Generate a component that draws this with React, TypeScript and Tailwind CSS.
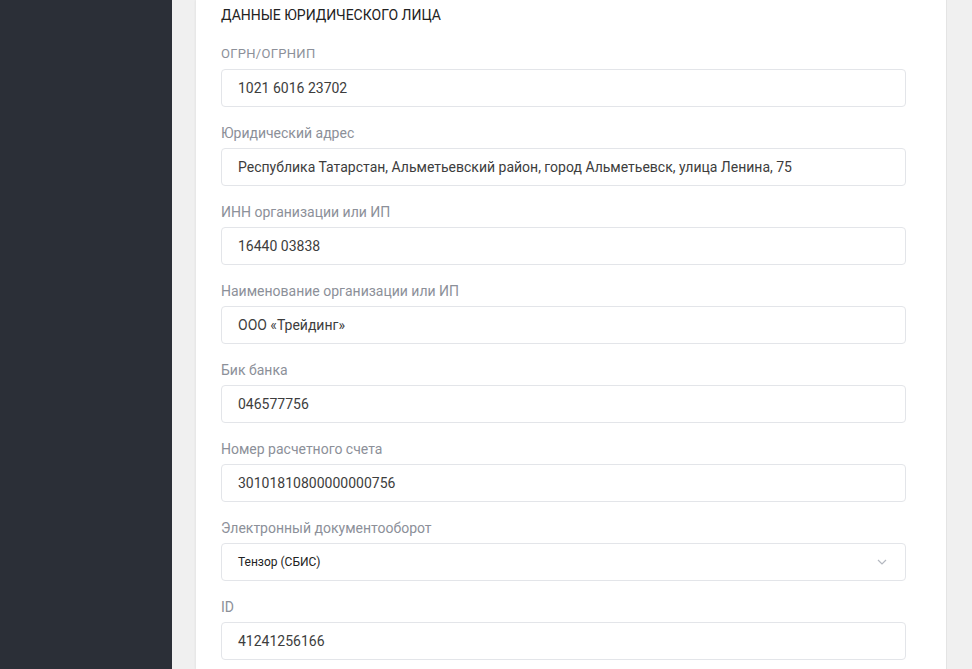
import React from 'react'

const fields: { label: string; value: string; select?: boolean; upper?: boolean }[] = [
  { label: 'ОГРН/ОГРНИП', value: '1021 6016 23702', upper: true },
  { label: 'Юридический адрес', value: 'Республика Татарстан, Альметьевский район, город Альметьевск, улица Ленина, 75' },
  { label: 'ИНН организации или ИП', value: '16440 03838' },
  { label: 'Наименование организации или ИП', value: 'ООО «Трейдинг»' },
  { label: 'Бик банка', value: '046577756' },
  { label: 'Номер расчетного счета', value: '30101810800000000756' },
  { label: 'Электронный документооборот', value: 'Тензор (СБИС)', select: true },
  { label: 'ID', value: '41241256166' },
]

function Field({ label, value, select, upper }: { label: string; value: string; select?: boolean; upper?: boolean }) {
  return (
    <div className="mb-4">
      <div className={`h-5 leading-5 text-[#8c9099] mb-[5px] ${upper ? 'text-[13px] tracking-[0.3px]' : 'text-[14px]'}`}>
        {label}
      </div>
      {select ? (
        <div className="h-[38px] w-[685px] border border-[#e3e5e9] rounded-[4px] bg-white flex items-center justify-between pl-4 pr-[18px]">
          <span className="text-[12px] text-[#222]">{value}</span>
          <svg width="10" height="6" viewBox="0 0 10 6" fill="none">
            <path d="M1 1l4 4 4-4" stroke="#b4b8c0" strokeWidth="1.2" />
          </svg>
        </div>
      ) : (
        <div className="h-[38px] w-[685px] border border-[#e3e5e9] rounded-[4px] bg-white flex items-center pl-4 text-[14px] text-[#3d3d3d]">
          {value}
        </div>
      )}
    </div>
  )
}

export default function App() {
  return (
    <div className="flex h-[669px] w-[972px] overflow-hidden bg-[#f0f0f0]" style={{ fontFamily: 'Roboto, "Noto Sans", sans-serif' }}>
      <div className="w-[172px] shrink-0 bg-[#2b2f37]" />
      <div className="w-[24px] shrink-0" />
      <div className="w-[751px] shrink-0 bg-white border-r border-[#e4e4e4] shadow-[-1px_0_2px_rgba(0,0,0,0.05)] pl-[25px] pt-[5px]">
        <div className="h-5 leading-5 text-[14px] text-[#222] mb-[19px]">ДАННЫЕ ЮРИДИЧЕСКОГО ЛИЦА</div>
        {fields.map((f) => (
          <Field key={f.label} {...f} />
        ))}
      </div>
    </div>
  )
}
